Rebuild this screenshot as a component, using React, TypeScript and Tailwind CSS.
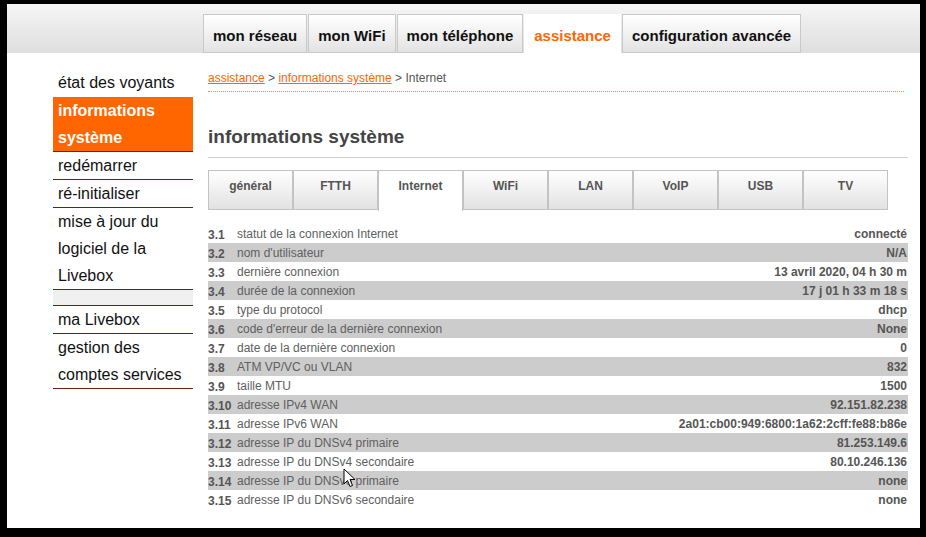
import React from 'react';

const navTabs = ['mon réseau', 'mon WiFi', 'mon téléphone', 'assistance', 'configuration avancée'];

const sideItems: { label: string; active?: boolean; spacer?: boolean }[] = [
  { label: 'état des voyants' },
  { label: 'informations système', active: true },
  { label: 'redémarrer' },
  { label: 'ré-initialiser' },
  { label: 'mise à jour du logiciel de la Livebox' },
  { label: '', spacer: true },
  { label: 'ma Livebox' },
  { label: 'gestion des comptes services' },
];

const subTabs = ['général', 'FTTH', 'Internet', 'WiFi', 'LAN', 'VoIP', 'USB', 'TV'];

const rows: [string, string, string][] = [
  ['3.1', 'statut de la connexion Internet', 'connecté'],
  ['3.2', "nom d'utilisateur", 'N/A'],
  ['3.3', 'dernière connexion', '13 avril 2020, 04 h 30 m'],
  ['3.4', 'durée de la connexion', '17 j 01 h 33 m 18 s'],
  ['3.5', 'type du protocol', 'dhcp'],
  ['3.6', "code d'erreur de la dernière connexion", 'None'],
  ['3.7', 'date de la dernière connexion', '0'],
  ['3.8', 'ATM VP/VC ou VLAN', '832'],
  ['3.9', 'taille MTU', '1500'],
  ['3.10', 'adresse IPv4 WAN', '92.151.82.238'],
  ['3.11', 'adresse IPv6 WAN', '2a01:cb00:949:6800:1a62:2cff:fe88:b86e'],
  ['3.12', 'adresse IP du DNSv4 primaire', '81.253.149.6'],
  ['3.13', 'adresse IP du DNSv4 secondaire', '80.10.246.136'],
  ['3.14', 'adresse IP du DNSv6 primaire', 'none'],
  ['3.15', 'adresse IP du DNSv6 secondaire', 'none'],
];

export default function App() {
  return (
    <div className="w-[926px] h-[537px] bg-black pt-[4px] pl-[7px] pr-[6px] font-['Liberation_Sans',Arial,sans-serif]">
      <div className="relative bg-white h-[524px] overflow-hidden">
        {/* Top nav */}
        <div className="h-[49px] bg-gradient-to-b from-[#f6f6f6] to-[#dedede] flex items-end pl-[196px] gap-px">
          {navTabs.map(t =>
            t === 'assistance' ? (
              <div key={t} className="h-[39px] px-[10px] pt-[13px] bg-white text-[15px] leading-[18px] font-bold text-[#ff6600]">
                {t}
              </div>
            ) : (
              <div
                key={t}
                className="h-[39px] px-[9px] pt-[12px] border border-[#c9c9c9] bg-gradient-to-b from-white to-[#e3e3e3] text-[15px] leading-[18px] font-bold text-[#111]"
              >
                {t}
              </div>
            )
          )}
        </div>

        <div className="flex pl-[46px]">
          {/* Sidebar */}
          <div className="w-[140px] mt-[16px] shrink-0">
            {sideItems.map((it, i) =>
              it.spacer ? (
                <div key={i} className="h-[16px] bg-[#f0f0f0] border-b border-[#6b1d16]" />
              ) : (
                <div
                  key={i}
                  className={`pl-[5px] pr-2 text-[16px] leading-[27px] border-b ${
                    it.active
                      ? 'bg-[#ff6600] text-white font-bold border-[#6b1d16]'
                      : i === 0
                      ? 'text-[#111] border-white'
                      : 'text-[#111] border-[#6b1d16]'
                  }`}
                >
                  {it.label}
                </div>
              )
            )}
          </div>

          {/* Content */}
          <div className="ml-[15px] w-[700px] pt-[18px]">
            <div className="text-[12px] leading-[14px] text-[#555] pb-[6px] border-b border-dotted border-[#ff8a3d] mr-[4px]">
              <span className="text-[#ff6600] underline">assistance</span> &gt;{' '}
              <span className="text-[#ff6600] underline">informations système</span> &gt; Internet
            </div>

            <h1 className="mt-[34px] text-[19px] leading-[22px] font-bold text-[#444] pb-[9px] border-b border-[#cfcfcf]">
              informations système
            </h1>

            <div className="mt-[12px] flex h-[40px]">
              {subTabs.map(t =>
                t === 'Internet' ? (
                  <div
                    key={t}
                    className="w-[85px] h-[41px] border border-b-0 border-[#c3c3c3] bg-white text-center pt-[8px] text-[12px] leading-[14px] font-bold text-[#555]"
                  >
                    {t}
                  </div>
                ) : (
                  <div
                    key={t}
                    className="w-[85px] border border-[#c3c3c3] bg-gradient-to-b from-white to-[#e2e2e2] text-center pt-[8px] text-[12px] leading-[14px] font-bold text-[#555]"
                  >
                    {t}
                  </div>
                )
              )}
            </div>

            <div className="mt-[14px]">
              {rows.map(([n, label, val], i) => (
                <div
                  key={n}
                  className={`flex items-center h-[19px] text-[12px] leading-[14px] ${i % 2 === 1 ? 'bg-[#cccccc]' : ''}`}
                >
                  <span className="w-[29px] shrink-0 font-bold text-[#555] pt-[2px]">{n}</span>
                  <span className="flex-1 text-[#606060]">{label}</span>
                  <span className="font-bold text-[#555] pr-[1px]">{val}</span>
                </div>
              ))}
            </div>
          </div>
        </div>

        {/* mouse cursor */}
        <svg className="absolute left-[336px] top-[464px]" width="13" height="20" viewBox="0 0 13 20">
          <path d="M1 1 L1 16 L4.5 12.5 L7 18.5 L9.5 17.5 L7 11.5 L12 11.5 Z" fill="white" stroke="black" strokeWidth="1" strokeLinejoin="round" />
        </svg>
      </div>
    </div>
  );
}
